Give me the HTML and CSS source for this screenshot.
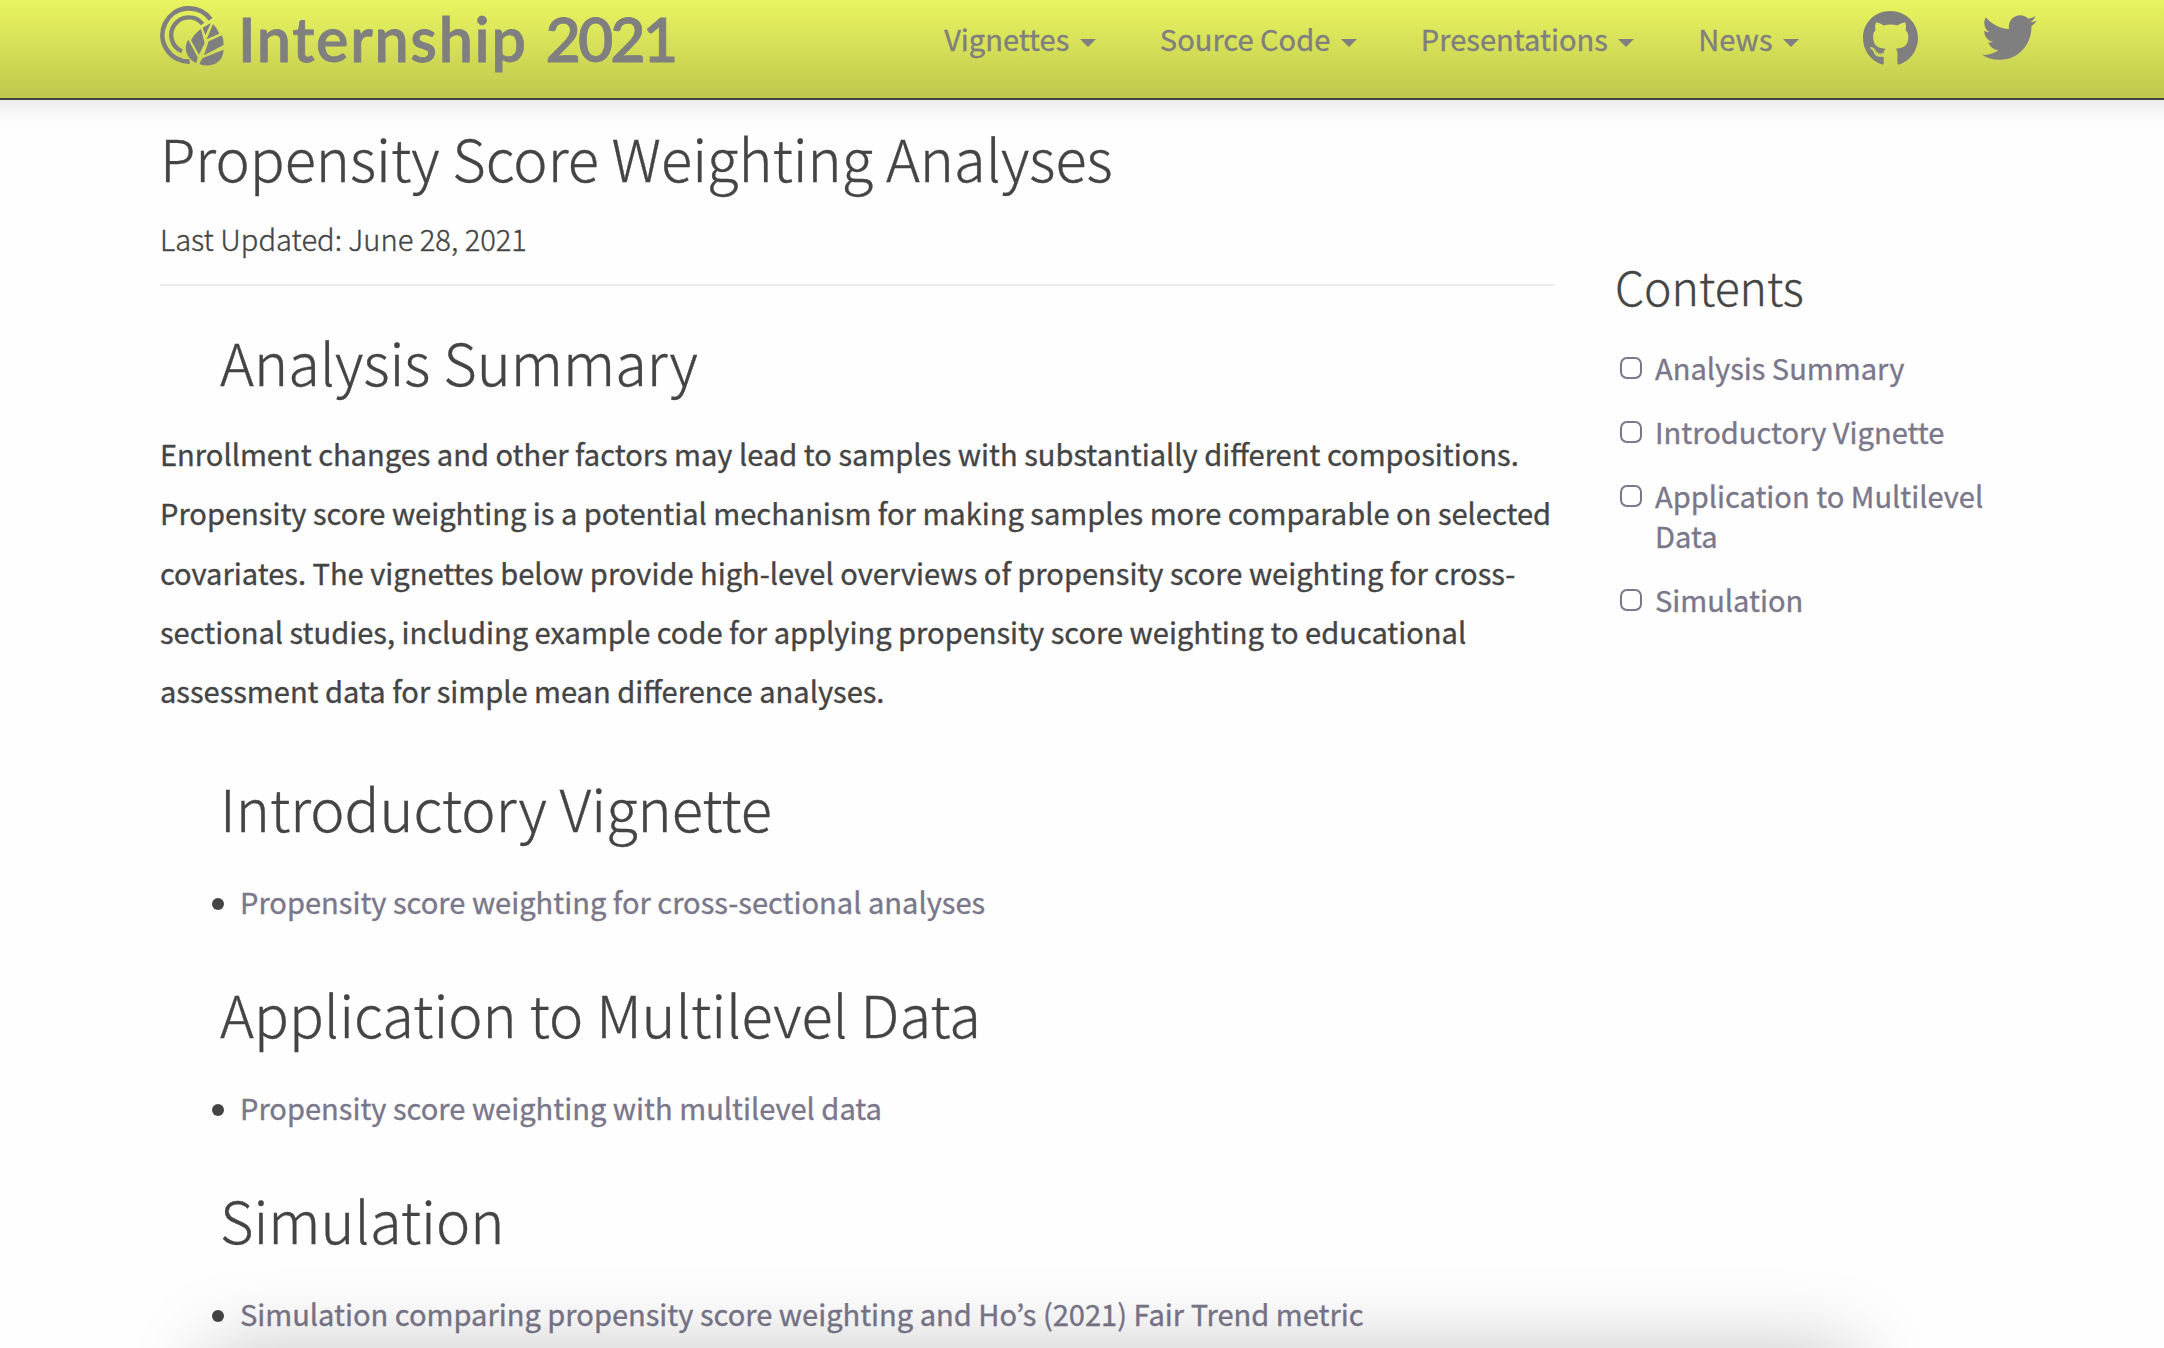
FILE: index.html
```html
<!DOCTYPE html>
<html lang="en">
<head>
<meta charset="utf-8">
<title>Propensity Score Weighting Analyses</title>
<link rel="stylesheet" href="styles.css">
</head>
<body>
<header class="navbar">
  <a class="brand">
    <svg class="brand-mark" viewBox="14 0 195 216" aria-hidden="true">
      <g fill="none" stroke="currentColor">
        <path stroke-width="14" d="M166 58A80 80 0 1 0 103 185"/>
        <path stroke-width="13" d="M142 72A53 53 0 1 0 80 154"/>
      </g>
      <path d="M142 83L167 69L150 106ZM173 72Q186 84 192 101L154 118ZM137 87L148 130L131 164L107 121Q117 101 137 87ZM99 119L127 172L123 190Q97 176 92 152Q89 132 99 119ZM160 124L200 106Q206 122 205 135L146 166ZM141 175L205 149Q204 176 182 190Q158 202 132 192Z"/>
    </svg>
    <span class="brand-name">Internship</span>
    <span class="brand-year">2021</span>
  </a>
  <nav class="menu">
    <a class="menu-item">Vignettes<span class="caret"></span></a>
    <a class="menu-item">Source Code<span class="caret"></span></a>
    <a class="menu-item">Presentations<span class="caret"></span></a>
    <a class="menu-item">News<span class="caret"></span></a>
    <a class="menu-icon"><svg class="github" viewBox="0 0 496 512" aria-label="GitHub"><path d="M165.9 397.4c0 2-2.3 3.6-5.2 3.6-3.3.3-5.6-1.3-5.6-3.6 0-2 2.3-3.6 5.2-3.6 3-.3 5.6 1.3 5.6 3.6zm-31.1-4.5c-.7 2 1.3 4.3 4.3 4.9 2.6 1 5.6 0 6.2-2s-1.3-4.3-4.3-5.2c-2.6-.7-5.5.3-6.2 2.3zm44.2-1.7c-2.9.7-4.9 2.6-4.6 4.9.3 2 2.9 3.3 5.9 2.6 2.9-.7 4.9-2.6 4.6-4.6-.3-1.9-3-3.2-5.9-2.9zM244.8 8C106.1 8 0 113.3 0 252c0 110.9 69.8 205.8 169.5 239.2 12.8 2.3 17.3-5.6 17.3-12.1 0-6.2-.3-40.4-.3-61.4 0 0-70 15-84.7-29.8 0 0-11.4-29.1-27.8-36.6 0 0-22.9-15.7 1.6-15.4 0 0 24.9 2 38.6 25.8 21.9 38.6 58.6 27.5 72.9 20.9 2.3-16 8.8-27.1 16-33.7-55.9-6.2-112.3-14.3-112.3-110.5 0-27.5 7.6-41.3 23.6-58.9-2.6-6.5-11.1-33.3 2.6-67.9 20.9-6.5 69 27 69 27 20-5.6 41.5-8.5 62.8-8.5s42.8 2.9 62.8 8.5c0 0 48.1-33.6 69-27 13.7 34.7 5.2 61.4 2.6 67.9 16 17.7 25.8 31.5 25.8 58.9 0 96.5-58.9 104.2-114.8 110.5 9.2 7.9 17 22.9 17 46.4 0 33.7-.3 75.4-.3 83.6 0 6.5 4.6 14.4 17.3 12.1C428.2 457.8 496 362.9 496 252 496 113.3 383.5 8 244.8 8zM97.2 352.9c-1.3 1-1 3.3.7 5.2 1.6 1.6 3.9 2.3 5.2 1 1.3-1 1-3.3-.7-5.2-1.6-1.6-3.9-2.3-5.2-1zm-10.8-8.1c-.7 1.3.3 2.9 2.3 3.9 1.6 1 3.6.7 4.3-.7.7-1.3-.3-2.9-2.3-3.9-2-.6-3.6-.3-4.3.7zm32.4 35.6c-1.6 1.3-1 4.3 1.3 6.2 2.3 2.3 5.2 2.6 6.5 1 1.3-1.3.7-4.3-1.3-6.2-2.2-2.3-5.2-2.6-6.5-1zm-11.4-14.7c-1.6 1-1.6 3.6 0 5.9 1.6 2.3 4.3 3.3 5.6 2.3 1.6-1.3 1.6-3.9 0-6.2-1.4-2.3-4-3.3-5.6-2z"/></svg></a>
    <a class="menu-icon"><svg class="twitter" viewBox="0 0 512 512" aria-label="Twitter"><path d="M459.37 151.716c.325 4.548.325 9.097.325 13.645 0 138.72-105.583 298.558-298.558 298.558-59.452 0-114.68-17.219-161.137-47.106 8.447.974 16.568 1.299 25.34 1.299 49.055 0 94.213-16.568 130.274-44.832-46.132-.975-84.792-31.188-98.112-72.772 6.498.974 12.995 1.624 19.818 1.624 9.421 0 18.843-1.3 27.614-3.573-48.081-9.747-84.143-51.98-84.143-102.985v-1.299c13.969 7.797 30.214 12.67 47.431 13.319-28.264-18.843-46.781-51.005-46.781-87.391 0-19.492 5.197-37.36 14.294-52.954 51.655 63.675 129.3 105.258 216.365 109.807-1.624-7.797-2.599-15.918-2.599-24.04 0-57.828 46.782-104.934 104.934-104.934 30.213 0 57.502 12.67 76.67 33.137 23.715-4.548 46.456-13.32 66.599-25.34-7.798 24.366-24.366 44.833-46.132 57.827 21.117-2.273 41.584-8.122 60.426-16.243-14.292 20.791-32.161 39.308-52.628 54.253z"/></svg></a>
  </nav>
</header>

<div class="page">
  <main class="content">
    <div class="page-header">
      <h1>Propensity Score Weighting Analyses</h1>
      <p class="updated">Last Updated: June 28, 2021</p>
    </div>
    <section>
      <h2>Analysis Summary</h2>
      <p class="summary">Enrollment changes and other factors may lead to samples with substantially different compositions.<br>
      Propensity score weighting is a potential mechanism for making samples more comparable on selected<br>
      covariates. The vignettes below provide high-level overviews of propensity score weighting for cross-<br>
      sectional studies, including example code for applying propensity score weighting to educational<br>
      assessment data for simple mean difference analyses.</p>
    </section>
    <section>
      <h2>Introductory Vignette</h2>
      <ul class="links"><li><a>Propensity score weighting for cross-sectional analyses</a></li></ul>
    </section>
    <section>
      <h2>Application to Multilevel Data</h2>
      <ul class="links"><li><a>Propensity score weighting with multilevel data</a></li></ul>
    </section>
    <section>
      <h2>Simulation</h2>
      <ul class="links"><li><a>Simulation comparing propensity score weighting and Ho’s (2021) Fair Trend metric</a></li></ul>
    </section>
  </main>

  <aside class="toc">
    <h3>Contents</h3>
    <ul class="toc-list">
      <li><span class="box"></span><a>Analysis Summary</a></li>
      <li><span class="box"></span><a>Introductory Vignette</a></li>
      <li><span class="box"></span><a>Application to Multilevel Data</a></li>
      <li><span class="box"></span><a>Simulation</a></li>
    </ul>
  </aside>
</div>
<div class="bottom-shade"></div>
</body>
</html>
```
FILE: styles.css
```css
* { box-sizing: border-box; margin: 0; padding: 0; }

body {
  position: relative;
  height: 1348px;
  overflow: hidden;
  background: #fefefe;
  color: #444;
  font: 400 29.07px/59.4px "Noto Sans CJK KR", "Open Sans", sans-serif;
  -webkit-text-stroke: 0.35px currentColor;
}

h1, h2, h3, .updated { font-weight: 300; }
ul { list-style: none; }

/* Top bar */
.navbar {
  display: flex;
  justify-content: space-between;
  align-items: flex-start;
  height: 100px;
  padding: 0 127px 0 160px;
  color: #7f7f7f;
  background: linear-gradient(#e9f460, #c0c84d);
  background-clip: padding-box;
  border-bottom: 2px solid #444;
}

.brand {
  display: flex;
  align-items: flex-start;
  font: 600 61px/77px Lato, sans-serif;
  -webkit-text-stroke: 0.8px currentColor;
}
.brand-mark { width: 65px; height: 72px; margin-right: 13px; fill: currentColor; }
.brand-name { letter-spacing: 1.7px; margin-right: 18px; }
.brand-year { letter-spacing: -3px; }

.menu { display: flex; gap: 64px; }
.menu-item { display: flex; align-items: center; height: 78px; }
.caret {
  margin: 8px 0 0 10.5px;
  border: 8px solid transparent;
  border-top-color: currentColor;
  border-bottom: 0;
}
.menu-icon svg { display: block; fill: currentColor; }
.github { width: 55px; height: 57px; margin-top: 10px; }
.twitter { width: 55px; height: 55px; margin-top: 10px; }

/* Page columns, under the soft shade of the top bar */
.page {
  display: flex;
  height: 1248px;
  padding: 22px 159px 0 160px;
  background: linear-gradient(#ebebeb, #f7f7f7 12px, #fcfcfc 22px, #fefefe 32px);
}
.content { width: 1395px; flex: none; }
.toc { margin: 134px 0 0 60px; width: 390px; flex: none; }

.page-header { height: 164px; border-bottom: 2px solid #ececec; margin-bottom: 40px; }
h1 { font-size: 57.75px; line-height: 70px; }
.updated { margin-top: 26px; font-size: 29.1px; line-height: 40px; }

section { margin-bottom: 47.4px; }
section:first-of-type { margin-bottom: 51.7px; }
h2 { margin: 0 0 29.2px 60px; font-size: 57.75px; line-height: 70px; }
.summary { margin-top: -1px; line-height: 59.3px; white-space: nowrap; }

.links li { display: flex; gap: 16px; margin-left: 52px; align-items: center; color: #444; }
.links li::before {
  content: "";
  width: 12px;
  height: 12px;
  margin-top: 5px;
  border-radius: 50%;
  background: #444;
}
.links a, .toc-list a { color: #7a778a; }

/* Contents list */
h3 { font-size: 46.3px; line-height: 60px; }
.toc-list { display: flex; flex-direction: column; gap: 24px; margin-top: 31px; line-height: 40px; }
.toc-list li { display: flex; gap: 13px; padding-left: 5px; }
.box {
  flex: none;
  width: 22px;
  height: 22px;
  margin-top: 10px;
  border: 2px solid #7a778a;
  border-radius: 7px;
}

/* Soft shadow rising from the lower edge of the window */
.bottom-shade {
  position: absolute;
  top: 1348px;
  left: 208px;
  width: 1645px;
  height: 200px;
  box-shadow: 0 0 80px rgba(0, 0, 0, 0.22);
}
```
